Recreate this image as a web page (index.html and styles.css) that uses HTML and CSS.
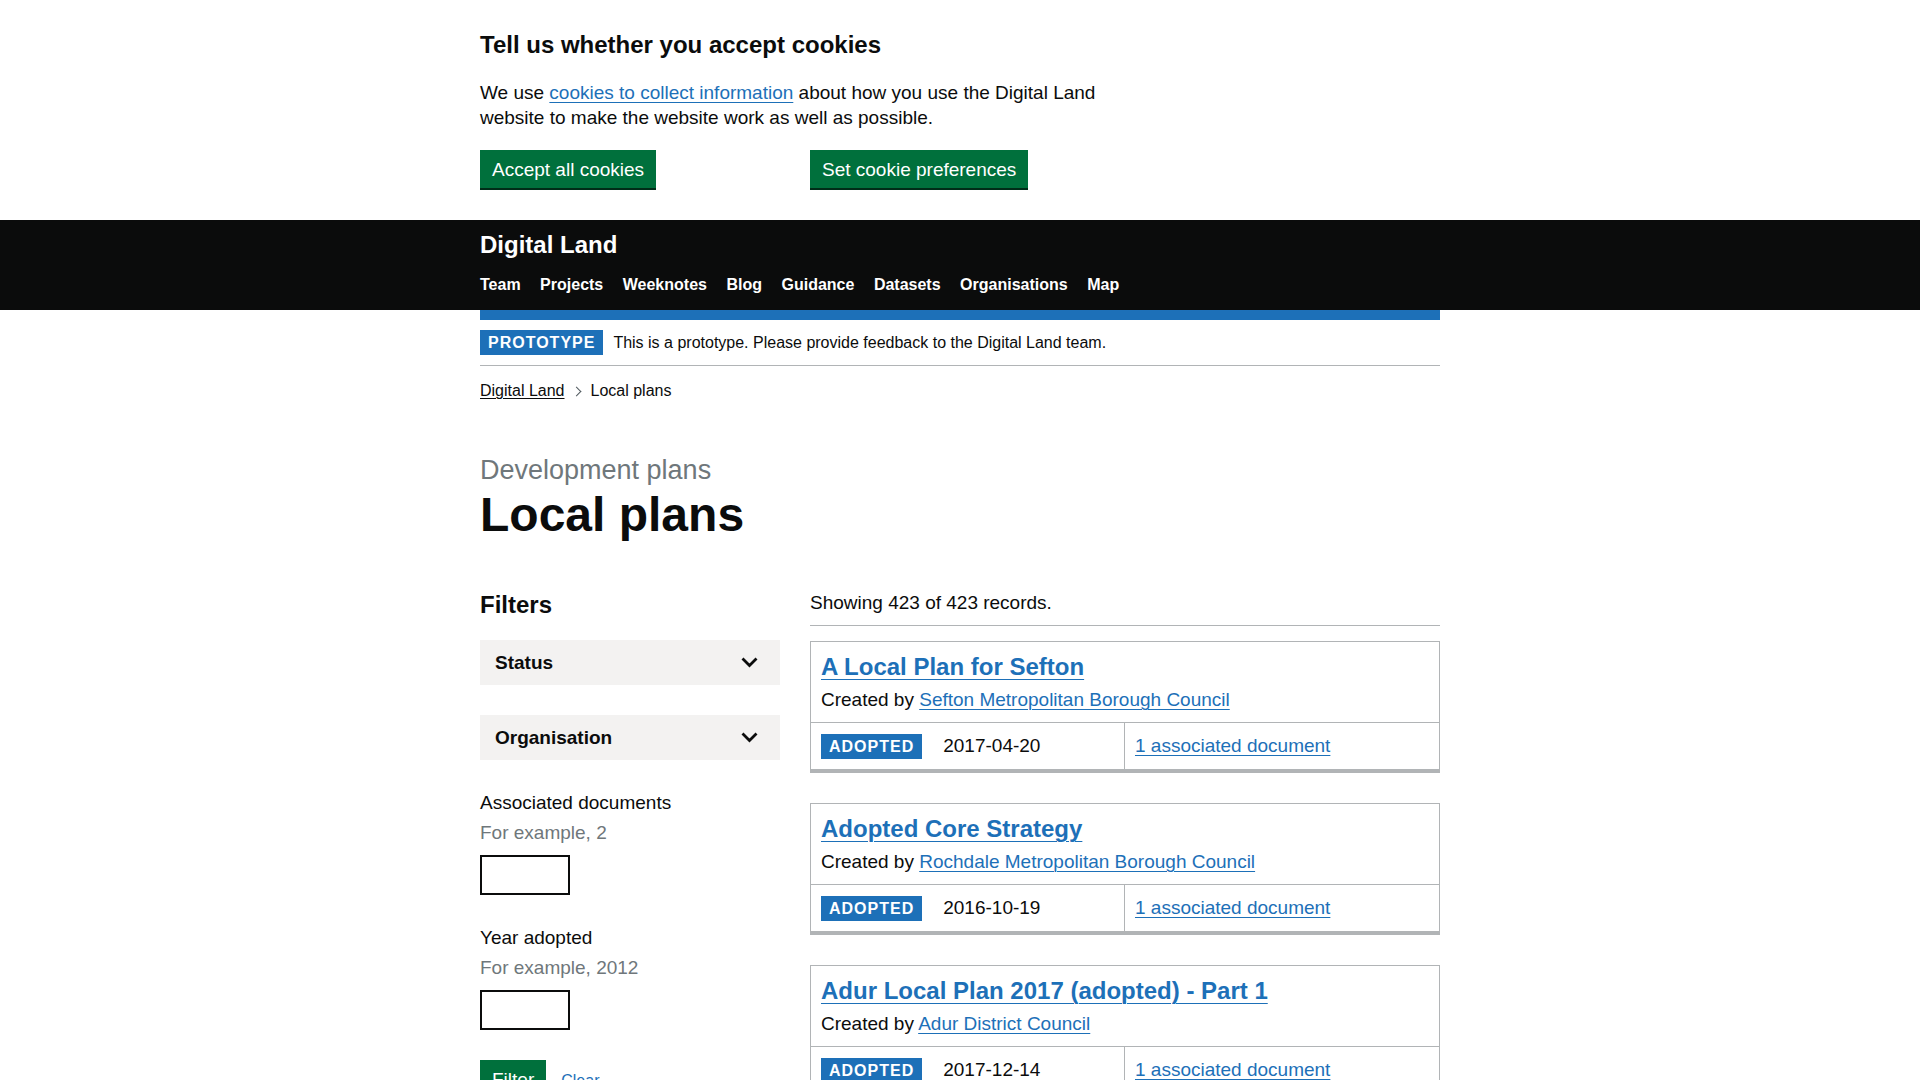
FILE: index.html
```html
<!DOCTYPE html>
<html lang="en">
<head>
<meta charset="utf-8">
<title>Local plans - Digital Land</title>
<link rel="stylesheet" href="styles.css">
</head>
<body>
<div class="cookie-banner">
  <div class="container">
    <div class="row">
      <div class="col-two-thirds">
        <h2 class="cookie-heading">Tell us whether you accept cookies</h2>
        <p class="body-text">We use <a class="link" href="#">cookies to collect information</a> about how you use the Digital Land website to make the website work as well as possible.</p>
      </div>
    </div>
    <div class="row">
      <div class="col-third"><button class="button">Accept all cookies</button></div>
      <div class="col-third"><button class="button">Set cookie preferences</button></div>
    </div>
  </div>
</div>

<header class="site-header">
  <div class="container">
    <div class="site-title">Digital Land</div>
    <ul class="nav">
      <li><a href="#">Team</a></li>
      <li><a href="#">Projects</a></li>
      <li><a href="#">Weeknotes</a></li>
      <li><a href="#">Blog</a></li>
      <li><a href="#">Guidance</a></li>
      <li><a href="#">Datasets</a></li>
      <li><a href="#">Organisations</a></li>
      <li><a href="#">Map</a></li>
    </ul>
  </div>
</header>

<div class="container">
  <div class="blue-bar"></div>
  <div class="phase-banner">
    <p class="phase-content"><strong class="tag phase-tag">Prototype</strong><span class="phase-text">This is a prototype. Please provide feedback to the Digital Land team.</span></p>
  </div>
  <nav class="breadcrumbs">
    <ol>
      <li><a href="#">Digital Land</a></li>
      <li class="crumb-current">Local plans</li>
    </ol>
  </nav>

  <main class="main">
    <span class="caption">Development plans</span>
    <h1 class="heading-xl">Local plans</h1>

    <div class="row">
      <div class="col-third">
        <h2 class="heading-m">Filters</h2>
        <div class="filter-section">
          <span>Status</span>
          <svg class="chevron" width="17" height="11" viewBox="0 0 17 11"><path d="M1.5 1.5 L8.5 8.5 L15.5 1.5" fill="none" stroke="#0b0c0c" stroke-width="2.8"/></svg>
        </div>
        <div class="filter-section">
          <span>Organisation</span>
          <svg class="chevron" width="17" height="11" viewBox="0 0 17 11"><path d="M1.5 1.5 L8.5 8.5 L15.5 1.5" fill="none" stroke="#0b0c0c" stroke-width="2.8"/></svg>
        </div>
        <div class="form-group">
          <label class="label" for="docs">Associated documents</label>
          <div class="hint">For example, 2</div>
          <input class="input" id="docs" type="text">
        </div>
        <div class="form-group">
          <label class="label" for="year">Year adopted</label>
          <div class="hint">For example, 2012</div>
          <input class="input" id="year" type="text">
        </div>
        <div class="button-group">
          <button class="button">Filter</button>
          <a class="link small-link" href="#">Clear</a>
        </div>
      </div>

      <div class="col-two-thirds">
        <p class="results-count">Showing 423 of 423 records.</p>

        <div class="card">
          <div class="card-head">
            <h3 class="card-title"><a class="link" href="#">A Local Plan for Sefton</a></h3>
            <p class="body-text">Created by <a class="link" href="#">Sefton Metropolitan Borough Council</a></p>
          </div>
          <div class="card-row">
            <div class="card-cell card-cell-left"><strong class="tag">Adopted</strong><span class="date">2017-04-20</span></div>
            <div class="card-cell"><a class="link" href="#">1 associated document</a></div>
          </div>
        </div>

        <div class="card">
          <div class="card-head">
            <h3 class="card-title"><a class="link" href="#">Adopted Core Strategy</a></h3>
            <p class="body-text">Created by <a class="link" href="#">Rochdale Metropolitan Borough Council</a></p>
          </div>
          <div class="card-row">
            <div class="card-cell card-cell-left"><strong class="tag">Adopted</strong><span class="date">2016-10-19</span></div>
            <div class="card-cell"><a class="link" href="#">1 associated document</a></div>
          </div>
        </div>

        <div class="card">
          <div class="card-head">
            <h3 class="card-title"><a class="link" href="#">Adur Local Plan 2017 (adopted) - Part 1</a></h3>
            <p class="body-text">Created by <a class="link" href="#">Adur District Council</a></p>
          </div>
          <div class="card-row">
            <div class="card-cell card-cell-left"><strong class="tag">Adopted</strong><span class="date">2017-12-14</span></div>
            <div class="card-cell"><a class="link" href="#">1 associated document</a></div>
          </div>
        </div>
      </div>
    </div>
  </main>
</div>
</body>
</html>
```

FILE: styles.css
```css
* { box-sizing: border-box; }

html, body {
  margin: 0;
  padding: 0;
  background: #ffffff;
  color: #0b0c0c;
  font-family: "Liberation Sans", Arial, sans-serif;
}

.container {
  max-width: 960px;
  margin: 0 auto;
}

.row {
  display: flex;
  margin: 0 -15px;
}

.col-third {
  width: 33.3333%;
  padding: 0 15px;
}

.col-two-thirds {
  width: 66.6667%;
  padding: 0 15px;
}

.link {
  color: #1d70b8;
  text-decoration: underline;
  text-decoration-thickness: 1px;
  text-underline-offset: 0.15em;
}

.body-text {
  font-size: 19px;
  line-height: 25px;
  margin: 0;
}

/* Cookie banner */
.cookie-banner {
  padding: 30px 0 32px;
}

.cookie-heading {
  font-size: 24px;
  line-height: 30px;
  font-weight: 700;
  margin: 0 0 20px;
}

.cookie-banner .body-text {
  margin-bottom: 20px;
}

.button {
  display: inline-block;
  font-family: inherit;
  font-size: 19px;
  line-height: 19px;
  font-weight: 400;
  color: #ffffff;
  background: #00703c;
  border: 2px solid transparent;
  border-radius: 0;
  box-shadow: 0 2px 0 #002d18;
  padding: 8px 10px 7px;
  margin: 0;
  cursor: pointer;
}

/* Header */
.site-header {
  background: #0b0c0c;
  color: #ffffff;
  padding: 10px 0 15px;
}

.site-title {
  font-size: 24px;
  line-height: 30px;
  font-weight: 700;
}

.nav {
  list-style: none;
  margin: 15px 0 0;
  padding: 0;
  display: flex;
  gap: 19.5px;
}

.nav a {
  color: #ffffff;
  text-decoration: none;
  font-size: 16px;
  line-height: 20px;
  font-weight: 700;
}

.blue-bar {
  height: 10px;
  background: #1d70b8;
}

/* Phase banner */
.phase-banner {
  padding: 10px 0;
  border-bottom: 1px solid #b1b4b6;
}

.phase-content {
  margin: 0;
  font-size: 16px;
  line-height: 20px;
}

.tag {
  display: inline-block;
  background: #1d70b8;
  color: #ffffff;
  font-size: 16px;
  line-height: 16px;
  font-weight: 700;
  letter-spacing: 1px;
  text-transform: uppercase;
  padding: 5px 8px 4px;
}

.phase-tag {
  margin-right: 10px;
}

/* Breadcrumbs */
.breadcrumbs {
  margin-top: 15px;
  font-size: 16px;
  line-height: 20px;
}

.breadcrumbs ol {
  list-style: none;
  margin: 0;
  padding: 0;
  display: flex;
}

.breadcrumbs a {
  color: #0b0c0c;
  text-decoration: underline;
  text-decoration-thickness: 1px;
  text-underline-offset: 0.15em;
}

.crumb-current {
  position: relative;
  margin-left: 10px;
  padding-left: 16px;
}

.crumb-current::before {
  content: "";
  position: absolute;
  left: -2px;
  top: 7px;
  width: 6px;
  height: 6px;
  border-top: 1px solid #505a5f;
  border-right: 1px solid #505a5f;
  transform: rotate(45deg);
}

/* Main */
.main {
  display: block;
  padding-top: 54px;
}

.caption {
  display: block;
  color: #6f777b;
  font-size: 27px;
  line-height: 30px;
  margin-bottom: 5px;
}

.heading-xl {
  font-size: 48px;
  line-height: 50px;
  font-weight: 700;
  margin: 0 0 50px;
}

.heading-m {
  font-size: 24px;
  line-height: 30px;
  font-weight: 700;
  margin: 0 0 20px;
}

.filter-section {
  display: flex;
  align-items: center;
  justify-content: space-between;
  background: #f3f2f1;
  padding: 10px 22px 10px 15px;
  font-size: 19px;
  line-height: 25px;
  font-weight: 700;
  margin-bottom: 30px;
}

.chevron {
  display: block;
}

.form-group {
  margin-bottom: 30px;
}

.label {
  display: block;
  font-size: 19px;
  line-height: 25px;
  margin-bottom: 5px;
}

.hint {
  color: #6f777b;
  font-size: 19px;
  line-height: 25px;
  margin-bottom: 10px;
}

.input {
  display: block;
  width: 90px;
  height: 40px;
  border: 2px solid #0b0c0c;
  border-radius: 0;
  padding: 5px;
  font-family: inherit;
  font-size: 19px;
  background: #ffffff;
}

.button-group {
  display: flex;
  align-items: baseline;
  gap: 15px;
}

.small-link {
  font-size: 16px;
}

/* Results */
.results-count {
  font-size: 19px;
  line-height: 25px;
  margin: 0 0 15px;
  padding-bottom: 10px;
  border-bottom: 1px solid #b1b4b6;
}

.card {
  border: 1px solid #b1b4b6;
  border-bottom-width: 4px;
  margin-bottom: 30px;
}

.card-head {
  padding: 10px;
}

.card-title {
  font-size: 24px;
  line-height: 30px;
  font-weight: 700;
  margin: 0 0 5px;
}

.card-row {
  display: grid;
  grid-template-columns: 1fr 1fr;
  border-top: 1px solid #b1b4b6;
}

.card-cell {
  padding: 10px;
  font-size: 19px;
  line-height: 25px;
}

.card-cell-left {
  border-right: 1px solid #b1b4b6;
}

.card-cell .tag {
  margin-right: 21px;
}
```
